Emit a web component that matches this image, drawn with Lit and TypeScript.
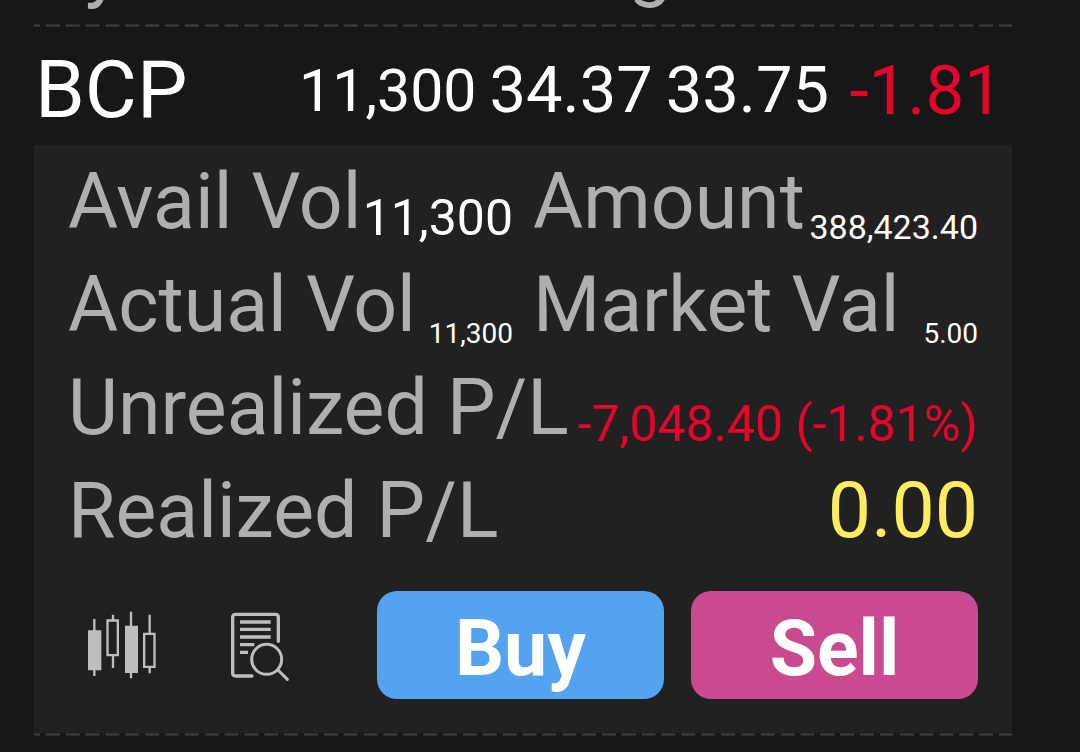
import { LitElement, html, css } from "lit";
import { customElement, property } from "lit/decorators.js";

@customElement("dashed-rule")
class DashedRule extends LitElement {
  static styles = css`
    :host {
      display: block;
      height: 3px;
    }
    .line {
      display: block;
      width: 100%;
      height: 3px;
      stroke: #414141;
      stroke-width: 2;
    }
  `;

  render() {
    return html`<svg class="line" aria-hidden="true">
      <line x1="0" y1="1.5" x2="100%" y2="1.5" pathLength="985" stroke-dasharray="14 6" stroke-dashoffset="8" />
    </svg>`;
  }
}

@customElement("position-row")
class PositionRow extends LitElement {
  @property() symbol = "";
  @property() volume = "";
  @property() average = "";
  @property() market = "";
  @property() change = "";

  static styles = css`
    :host {
      display: block;
    }
    .row {
      display: flex;
      align-items: center;
      gap: 13px;
      padding: 16px 9px 8px 1px;
      white-space: nowrap;
      color: #ffffff;
    }
    .symbol {
      flex: 1;
      margin: 0;
      font-size: 80px;
      font-weight: 400;
    }
    .volume {
      font-size: 59px;
    }
    .price {
      font-size: 65px;
    }
    .change {
      min-width: 161px;
      font-size: 69px;
      text-align: right;
      color: #e4042c;
    }
  `;

  render() {
    return html`<div class="row">
      <h2 class="symbol">${this.symbol}</h2>
      <span class="volume">${this.volume}</span>
      <span class="price">${this.average}</span>
      <span class="price">${this.market}</span>
      <span class="change">${this.change}</span>
    </div>`;
  }
}

interface Detail {
  label: string;
  value: string;
  size: string;
  wide?: boolean;
}

const DETAILS: Detail[] = [
  { label: "Avail Vol", value: "11,300", size: "medium" },
  { label: "Amount", value: "388,423.40", size: "small" },
  { label: "Actual Vol", value: "11,300", size: "tiny" },
  { label: "Market Val", value: "5.00", size: "tiny" },
  { label: "Unrealized P/L", value: "-7,048.40 (-1.81%)", size: "medium loss", wide: true },
  { label: "Realized P/L", value: "0.00", size: "large even", wide: true },
];

@customElement("position-details")
class PositionDetails extends LitElement {
  static styles = css`
    :host {
      display: block;
      padding: 11px 34px 34px;
      background: #212121;
    }
    .details {
      display: grid;
      grid-template-columns: 1fr 1fr;
      grid-auto-rows: 91px;
      gap: 12px 20px;
      margin: 0;
    }
    .item {
      display: flex;
      align-items: flex-end;
      justify-content: space-between;
      min-width: 0;
      white-space: nowrap;
    }
    .wide {
      grid-column: 1 / -1;
    }
    .label {
      font-size: 77px;
      color: #afafaf;
    }
    .value {
      margin: 0;
      color: #ffffff;
    }
    .large {
      font-size: 77px;
    }
    .medium {
      font-size: 50px;
    }
    .small {
      font-size: 34px;
    }
    .tiny {
      font-size: 28px;
    }
    .loss {
      color: #e4042c;
    }
    .even {
      color: #ffec60;
    }
    .actions {
      display: grid;
      grid-template-columns: 282fr 287fr 287fr;
      gap: 27px;
      margin-top: 35px;
    }
    .tools {
      display: flex;
      gap: 28px;
    }
    .tool {
      width: 108px;
      height: 108px;
      padding: 0;
      border: 0;
      border-radius: 50%;
      background: #1f2021;
    }
    .icon {
      display: block;
      width: 108px;
      height: 108px;
      fill: none;
      stroke: #bebebe;
      stroke-linecap: round;
      stroke-linejoin: round;
    }
    .trade {
      height: 108px;
      padding: 8px 0 0;
      border: 0;
      border-radius: 20px;
      font-family: inherit;
      font-size: 77px;
      font-weight: 700;
      line-height: 90px;
      color: #ffffff;
    }
    .buy {
      background: #53a3f0;
    }
    .sell {
      background: #ca4a8f;
    }
  `;

  render() {
    return html`
      <dl class="details">
        ${DETAILS.map(
          (d) => html`<div class="item ${d.wide ? "wide" : ""}">
            <dt class="label">${d.label}</dt>
            <dd class="value ${d.size}">${d.value}</dd>
          </div>`
        )}
      </dl>
      <div class="actions">
        <div class="tools">
          <button class="tool" type="button" aria-label="Chart">
            <svg class="icon" viewBox="54 3 324 324" aria-hidden="true">
              <g stroke-width="7" stroke-linecap="butt" stroke-linejoin="miter">
                <path d="M133 87V124M133 238V258M189 74V90M189 197V234M243 65V110M243 248V265M299 74V130M299 231V250" />
                <path fill="#bebebe" stroke="none" d="M114 121h40v120h-40zM225 107h39v142h-39z" />
                <path d="M172.500 91.500h31v104h-31zM282.500 131.500h31v99h-31z" />
              </g>
            </svg>
          </button>
          <button class="tool" type="button" aria-label="Order details">
            <svg class="icon" viewBox="462 3 324 324" aria-hidden="true">
              <path stroke-width="10" d="M685 154V82Q685 73 676 73H557Q548 73 548 82V249Q548 258 557 258H606" />
              <path stroke-width="10" stroke-linecap="butt" d="M570 96H662M570 118H662M570 141H662M570 164H613M570 187H594" />
              <circle stroke-width="9" cx="650" cy="208" r="45" />
              <path stroke-width="9" d="M684 240L712 268" />
            </svg>
          </button>
        </div>
        <button class="trade buy" type="button">Buy</button>
        <button class="trade sell" type="button">Sell</button>
      </div>
    `;
  }
}

@customElement("app-root")
class AppRoot extends LitElement {
  static styles = css`
    :host {
      display: block;
      min-height: 100vh;
      box-sizing: border-box;
      overflow: hidden;
      padding: 0 68px 0 34px;
      background: #171717;
      font-family: Roboto, sans-serif;
    }
    .columns {
      display: flex;
      align-items: flex-end;
      justify-content: space-between;
      box-sizing: border-box;
      height: 24px;
      padding: 0 340px 13px 5px;
      overflow: hidden;
      font-size: 77px;
      color: #afafaf;
    }
  `;

  render() {
    return html`
      <header class="columns"><span>Symbol</span><span>Avg</span></header>
      <dashed-rule></dashed-rule>
      <position-row symbol="BCP" volume="11,300" average="34.37" market="33.75" change="-1.81"></position-row>
      <position-details></position-details>
      <dashed-rule></dashed-rule>
    `;
  }
}
